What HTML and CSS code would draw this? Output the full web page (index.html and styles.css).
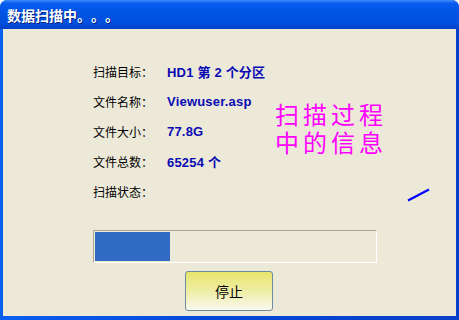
FILE: index.html
```html
<!DOCTYPE html>
<html lang="zh-CN">
<head>
    <meta charset="UTF-8">
    <title>数据扫描中</title>
    <link rel="stylesheet" href="styles.css">
</head>
<body>
    <div class="window">
        <div class="titlebar">数据扫描中。。。</div>
        <div class="client">
            <div class="info">
                <div class="rows">
                    <div class="row"><span class="label">扫描目标：</span><span class="value">HD1 第 2 个分区</span></div>
                    <div class="row"><span class="label">文件名称：</span><span class="value">Viewuser.asp</span></div>
                    <div class="row"><span class="label">文件大小：</span><span class="value">77.8G</span></div>
                    <div class="row"><span class="label">文件总数：</span><span class="value">65254 个</span></div>
                    <div class="row"><span class="label">扫描状态：</span><span class="value"></span></div>
                </div>
                <div class="note">
                    <div class="note-line">扫描过程</div>
                    <div class="note-line">中的信息</div>
                </div>
                <svg class="spinner" width="24" height="14" viewBox="0 0 24 14">
                    <line x1="1" y1="12.5" x2="22" y2="1.5" stroke="#0000ff" stroke-width="2.2"/>
                </svg>
            </div>
            <div class="progress">
                <div class="progress-fill" style="width: 75px"></div>
            </div>
            <div class="actions">
                <button class="stop">停止</button>
            </div>
        </div>
    </div>
</body>
</html>
```

FILE: styles.css
```css
body {
    margin: 0;
    padding: 0;
    width: 459px;
    height: 320px;
    overflow: hidden;
    font-family: "SimSun", "Noto Sans CJK SC", sans-serif;
    text-spacing-trim: space-all;
}
.window {
    width: 459px;
    height: 320px;
    box-sizing: border-box;
    background: linear-gradient(90deg, #0a5ff0, #0046d8 50%, #0a40c8);
    padding: 0 3px 4px 3px;
    border-radius: 7px 7px 0 0;
    display: flex;
    flex-direction: column;
}
.titlebar {
    height: 29px;
    margin: 0 -3px;
    padding-left: 7px;
    display: flex;
    align-items: center;
    color: #ffffff;
    font-weight: bold;
    font-size: 14px;
    border-radius: 7px 7px 0 0;
    text-shadow: 1px 1px 0 #0a1f80;
    text-spacing-trim: space-all;
    background: linear-gradient(180deg, #3d8cf8 0%, #0a5cf0 12%, #0054e3 40%, #0050de 80%, #0040c8 100%);
}
.client {
    flex: 1;
    background-color: #ece9d8;
    display: flex;
    flex-direction: column;
    padding-left: 90px;
}
.info {
    display: flex;
    position: relative;
    padding-top: 34px;
}
.rows {
    display: flex;
    flex-direction: column;
    gap: 13px;
    width: 182px;
}
.row {
    display: flex;
    align-items: center;
    height: 17px;
}
.label {
    width: 74px;
    font-size: 12px;
    color: #000000;
}
.value {
    color: #0a0ab4;
    font-weight: bold;
    font-size: 13px;
    font-family: "Liberation Sans", "Noto Sans CJK SC", sans-serif;
    letter-spacing: 0.2px;
}
.note {
    margin-top: 37px;
    color: #ff00ff;
    font-size: 24px;
    font-family: "Noto Sans CJK SC", sans-serif;
    letter-spacing: 4px;
}
.note-line {
    height: 28px;
    line-height: 28px;
}
.spinner {
    position: absolute;
    left: 314px;
    top: 159px;
}
.progress {
    margin-top: 30px;
    width: 284px;
    height: 33px;
    box-sizing: border-box;
    border: 1px solid #ffffff;
    border-top-color: #aca899;
    border-left-color: #aca899;
    padding: 1px;
}
.progress-fill {
    height: 100%;
    background-color: #316ac5;
}
.actions {
    padding-left: 92px;
    margin-top: 8px;
}
.stop {
    width: 88px;
    height: 40px;
    border: 1px solid #6e8ba0;
    border-radius: 3px;
    background: linear-gradient(180deg, #e8e66c 0%, #eeed9e 45%, #f8f8ee 100%);
    font-family: "Noto Sans CJK SC", sans-serif;
    font-size: 14px;
    color: #000000;
    padding: 0;
}
```
